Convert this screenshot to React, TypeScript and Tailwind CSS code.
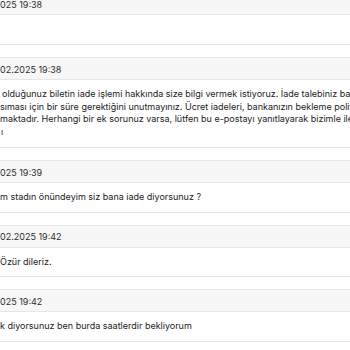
import React from "react";

type Card = {
  date: string;
  dateOffset: string;
  lines: { text: string; cls: string }[];
};

const cards: Card[] = [
  { date: "025 19:38", dateOffset: "ml-[-1px]", lines: [{ text: "\u00a0", cls: "" }] },
  {
    date: "02.2025 19:38",
    dateOffset: "ml-[-1px]",
    lines: [
      {
        text: "olduğunuz biletin iade işlemi hakkında size bilgi vermek istiyoruz. İade talebiniz başarıyla alınmıştır.",
        cls: "ml-[1px]",
      },
      {
        text: "sıması için bir süre gerektiğini unutmayınız. Ücret iadeleri, bankanızın bekleme politikalarına bağlı olarak",
        cls: "ml-[-1px]",
      },
      {
        text: "maktadır. Herhangi bir ek sorunuz varsa, lütfen bu e-postayı yanıtlayarak bizimle iletişime geçebilirsiniz.",
        cls: "ml-[-1px]",
      },
      { text: "ı", cls: "ml-[0px]" },
    ],
  },
  {
    date: "025 19:39",
    dateOffset: "ml-[-1px]",
    lines: [{ text: "m stadın önündeyim siz bana iade diyorsunuz ?", cls: "ml-[-1px]" }],
  },
  {
    date: "02.2025 19:42",
    dateOffset: "ml-[-1px]",
    lines: [{ text: "Özür dileriz.", cls: "ml-[-1px]" }],
  },
  {
    date: "025 19:42",
    dateOffset: "ml-[-1px]",
    lines: [{ text: "k diyorsunuz ben burda saatlerdir bekliyorum", cls: "ml-[-1px]" }],
  },
];

export default function App() {
  return (
    <div
      className="w-[350px] h-[350px] overflow-hidden bg-white text-[#222222]"
      style={{ fontFamily: "Inter, 'Noto Sans', sans-serif" }}
    >
      <div className="mt-[-8px] ml-[-20px] w-[400px] flex flex-col gap-[12px]">
        {cards.map((c, i) => (
          <div key={i} className="border border-[#e6e6e6] bg-white">
            <div className="h-[22px] pt-[2px] bg-[#f7f7f7] border-b border-[#e6e6e6] flex items-center pl-[20px] text-[9px] text-[#2e2e2e] whitespace-nowrap">
              <span className={c.dateOffset}>{c.date}</span>
            </div>
            <div className="pl-[20px] py-[8px] text-[9px] leading-[12.75px] whitespace-nowrap">
              {c.lines.map((l, j) => (
                <div key={j} className={l.cls}>
                  {l.text}
                </div>
              ))}
            </div>
          </div>
        ))}
      </div>
    </div>
  );
}
